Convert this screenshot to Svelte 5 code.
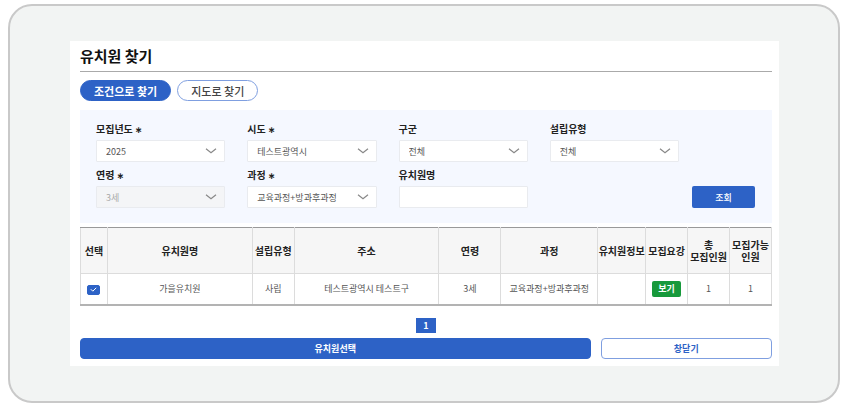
<script>
  let fields = $state([
    { id: "year", label: "모집년도", required: true, options: ["2025"], value: "2025" },
    { id: "sido", label: "시도", required: true, options: ["테스트광역시"], value: "테스트광역시" },
    { id: "gugun", label: "구군", options: ["전체"], value: "전체" },
    { id: "type", label: "설립유형", options: ["전체"], value: "전체" },
    { id: "age", label: "연령", required: true, options: ["3세"], value: "3세", disabled: true },
    { id: "course", label: "과정", required: true, options: ["교육과정+방과후과정"], value: "교육과정+방과후과정" },
    { id: "name", label: "유치원명", value: "" },
  ]);

  // widths are relative shares of the table
  const columns = [
    { title: ["선택"], width: 27 },
    { title: ["유치원명"], width: 145 },
    { title: ["설립유형"], width: 42 },
    { title: ["주소"], width: 145 },
    { title: ["연령"], width: 62 },
    { title: ["과정"], width: 97 },
    { title: ["유치원정보"], width: 48 },
    { title: ["모집요강"], width: 42 },
    { title: ["총", "모집인원"], width: 42 },
    { title: ["모집가능", "인원"], width: 42 },
  ];
  const totalWidth = columns.reduce((sum, c) => sum + c.width, 0);

  let rows = $state([
    {
      checked: true,
      name: "가을유치원",
      type: "사립",
      address: "테스트광역시 테스트구",
      age: "3세",
      course: "교육과정+방과후과정",
      total: 1,
      available: 1,
    },
  ]);

  let tab = $state("condition");
</script>

<div class="frame">
  <main class="panel">
    <h1>유치원 찾기</h1>

    <div class="tabs">
      <button type="button" class:active={tab === "condition"} onclick={() => (tab = "condition")}>
        조건으로 찾기
      </button>
      <button type="button" class:active={tab === "map"} onclick={() => (tab = "map")}>
        지도로 찾기
      </button>
    </div>

    <form class="filter" onsubmit={(e) => e.preventDefault()}>
      <div class="fields">
        {#each fields as field (field.id)}
          <div class="field">
            <label for={field.id}>
              {field.label}
              {#if field.required}<span class="required">∗</span>{/if}
            </label>
            {#if field.options}
              <div class="select">
                <select id={field.id} bind:value={field.value} disabled={field.disabled}>
                  {#each field.options as option}
                    <option value={option}>{option}</option>
                  {/each}
                </select>
                <svg width="12" height="6" viewBox="0 0 12 6" aria-hidden="true">
                  <path d="M1 0.8 L6 4.8 L11 0.8" />
                </svg>
              </div>
            {:else}
              <input type="text" id={field.id} bind:value={field.value} />
            {/if}
          </div>
        {/each}
      </div>
      <button type="submit" class="search">조회</button>
    </form>

    <table>
      <colgroup>
        {#each columns as column}
          <col style="width: {(column.width / totalWidth) * 100}%" />
        {/each}
      </colgroup>
      <thead>
        <tr>
          {#each columns as column}
            <th scope="col">
              {#each column.title as line, i}{#if i > 0}<br />{/if}{line}{/each}
            </th>
          {/each}
        </tr>
      </thead>
      <tbody>
        {#each rows as row}
          <tr>
            <td>
              <label class="check">
                <input type="checkbox" bind:checked={row.checked} aria-label={row.name} />
                <svg width="7" height="5" viewBox="0 0 7 5" aria-hidden="true">
                  <path d="M0.8 2.2 L2.8 4.2 L6.2 0.8" />
                </svg>
              </label>
            </td>
            <td>{row.name}</td>
            <td>{row.type}</td>
            <td>{row.address}</td>
            <td>{row.age}</td>
            <td>{row.course}</td>
            <td></td>
            <td><button type="button" class="view">보기</button></td>
            <td>{row.total}</td>
            <td>{row.available}</td>
          </tr>
        {/each}
      </tbody>
    </table>

    <nav class="paging">
      <button type="button" aria-current="page">1</button>
    </nav>

    <div class="actions">
      <button type="button" class="choose">유치원선택</button>
      <button type="button" class="close">창닫기</button>
    </div>
  </main>
</div>

<style>
  :global(body) {
    background: #fff;
  }

  .frame {
    margin: 4px 10px 0 8px;
    padding: 35px 59px 35px 60px;
    border: 2px solid #c9c9c9;
    border-radius: 24px;
    background: #f2f4f3;
    font-family: "Noto Sans CJK KR", "Noto Sans", sans-serif;
    font-size: 9px;
    color: #555;
  }

  .frame * {
    box-sizing: border-box;
  }

  button,
  input,
  select {
    margin: 0;
    padding: 0;
    border: 0;
    font-family: inherit;
    font-size: 9px;
    color: inherit;
  }

  button {
    display: flex;
    align-items: center;
    justify-content: center;
    cursor: pointer;
  }

  .panel {
    padding: 0 7px 7px 10px;
    background: #fff;
  }

  h1 {
    margin: 0;
    border-bottom: 1px solid #aaa;
    font-size: 15px;
    font-weight: 700;
    line-height: 30px;
    color: #111;
  }

  .tabs {
    display: flex;
    gap: 6px;
    padding: 8px 0 9px;
  }

  .tabs button {
    height: 21px;
    padding: 0 13px;
    border: 1px solid #7f9fe0;
    border-radius: 11px;
    background: #fff;
    font-size: 11px;
    font-weight: 500;
    color: #444;
  }

  .tabs .active {
    border-color: #2d62c6;
    background: #2d62c6;
    font-weight: 700;
    color: #fff;
  }

  .filter {
    display: flex;
    align-items: flex-end;
    gap: 13px;
    padding: 12px 17px 15px 16px;
    background: #f5f8ff;
  }

  .fields {
    flex: 1;
    display: grid;
    grid-template-columns: repeat(4, 1fr);
    gap: 6px 22px;
  }

  .field {
    display: flex;
    flex-direction: column;
    gap: 4px;
    min-width: 0;
  }

  .field label {
    font-size: 10px;
    font-weight: 700;
    line-height: 14px;
    color: #222;
  }

  .required {
    font-family: "DejaVu Sans", sans-serif;
    font-size: 9px;
    line-height: 1;
  }

  .select {
    display: grid;
    align-items: center;
  }

  .select > * {
    grid-area: 1 / 1;
  }

  .select svg {
    justify-self: end;
    margin-right: 8px;
    pointer-events: none;
  }

  .select path {
    fill: none;
    stroke: #888;
    stroke-width: 1.2;
  }

  select,
  input[type="text"] {
    width: 100%;
    height: 22px;
    padding: 0 9px;
    border: 1px solid #e9ebef;
    border-radius: 1px;
    background: #fff;
    appearance: none;
  }

  select:disabled {
    background: #f4f5f7;
    color: #aaa;
    opacity: 1;
  }

  .search {
    width: 63px;
    height: 22px;
    border-radius: 2px;
    background: #2d62c6;
    font-weight: 500;
    color: #fff;
  }

  table {
    width: 100%;
    margin-top: 4px;
    border-collapse: collapse;
    border-top: 1px solid #999;
    border-bottom: 2px solid #b3b3b3;
    table-layout: fixed;
  }

  th,
  td {
    padding: 0;
    border: 1px solid #dcdcdc;
    text-align: center;
    white-space: nowrap;
  }

  thead th {
    height: 46px;
    border-top-color: #999;
    background: #f6f6f6;
    font-size: 10px;
    font-weight: 700;
    line-height: 12px;
    color: #222;
  }

  tbody td {
    height: 31px;
  }

  tbody tr:last-child td {
    border-bottom: 2px solid #b3b3b3;
  }

  .check {
    display: inline-grid;
    place-items: center;
    vertical-align: middle;
  }

  .check > * {
    grid-area: 1 / 1;
  }

  .check input {
    width: 13px;
    height: 10px;
    border: 1px solid #2d62c6;
    border-radius: 2px;
    background: #fff;
    appearance: none;
  }

  .check input:checked {
    background: #2d62c6;
  }

  .check svg {
    pointer-events: none;
  }

  .check path {
    fill: none;
    stroke: #fff;
    stroke-width: 1;
  }

  .view {
    width: 29px;
    height: 16px;
    margin: 0 auto;
    border-radius: 2px;
    background: #17993b;
    font-weight: 700;
    color: #fff;
  }

  .paging {
    display: flex;
    justify-content: center;
    padding: 12px 0 5px;
  }

  .paging button {
    width: 20px;
    height: 15px;
    background: #2d62c6;
    font-weight: 700;
    color: #fff;
  }

  .actions {
    display: flex;
    gap: 10px;
  }

  .actions button {
    height: 21px;
    border: 1px solid #2d62c6;
    border-radius: 4px;
    font-weight: 700;
  }

  .choose {
    flex: 3;
    background: #2d62c6;
    color: #fff;
  }

  .close {
    flex: 1;
    background: #fff;
    color: #2d62c6;
  }

  .actions .close {
    border-color: #7f9fe0;
  }
</style>
